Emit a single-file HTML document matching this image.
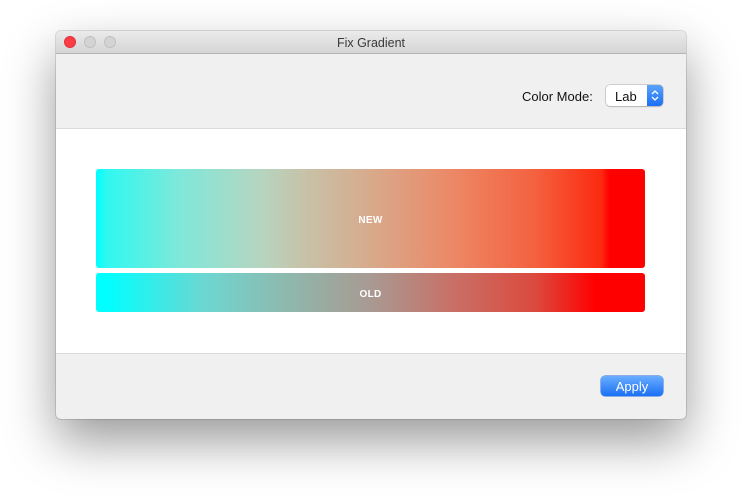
<!DOCTYPE html><html><head><style>
body{margin:0;width:742px;height:500px;background:#fff;font-family:"Liberation Sans",sans-serif;position:relative;overflow:hidden}
.win{position:absolute;left:56px;top:31px;width:630px;height:388px;border-radius:5px;overflow:hidden;box-shadow:0 22px 50px rgba(0,0,0,.4),0 0 0 1px rgba(0,0,0,.12);background:#f0f0f0}
.tb{height:22px;background:linear-gradient(#ebebeb,#d5d5d5);border-bottom:1px solid #b4b4b4;text-align:center;font-size:12.5px;line-height:24px;color:#3a3a3a}
.dot{position:absolute;top:5px;width:12px;height:12px;border-radius:50%;box-sizing:border-box}
.top{position:absolute;top:23px;left:0;right:0;height:74px;background:#f0f0f0;border-bottom:1px solid #dcdcdc}
.mid{position:absolute;top:98px;left:0;right:0;height:224px;background:#fff;border-bottom:1px solid #dcdcdc}
.bar{position:absolute;left:40px;width:549px;border-radius:3px;color:#fff;font-weight:bold;font-size:10px;text-align:center;letter-spacing:.3px}
</style></head><body>
<div class="win">
<div class="tb">Fix Gradient</div>
<div class="dot" style="left:8px;background:#fc3c44;border:1px solid #e0313a"></div>
<div class="dot" style="left:28px;background:#d4d4d4;border:1px solid #c0c0c0"></div>
<div class="dot" style="left:48px;background:#d4d4d4;border:1px solid #c0c0c0"></div>
<div class="top">
<span style="position:absolute;left:466px;top:35px;font-size:13px;color:#111">Color Mode:</span>
<div style="position:absolute;left:550px;top:31px;width:57px;height:21px;border-radius:4px;background:#fff;box-shadow:0 0 0 .5px #aaa,0 1px 1px rgba(0,0,0,.2);overflow:hidden">
<span style="position:absolute;left:9px;top:4px;font-size:13px;color:#111">Lab</span>
<div style="position:absolute;right:0;top:0;width:16px;height:21px;background:linear-gradient(#5aa3fb,#1c6ff6)">
<svg width="16" height="21" viewBox="0 0 16 21"><path d="M5 9 L8 6 L11 9 M5 12 L8 15 L11 12" fill="none" stroke="#fff" stroke-width="1.3"/></svg></div>
</div>
</div>
<div class="mid">
<div class="bar" style="top:40px;height:99px;line-height:103px;background:linear-gradient(90deg,#0ff 0%,#2ff8f0 2%,#7ee8da 15%,#b6d5c0 30%,#c7c2a8 38%,#d8aa8c 50%,#ec8866 65%,#f4613f 80%,#fc2a10 92%,#f00 93.5%,#f00)">NEW</div>
<div class="bar" style="top:144px;height:39px;line-height:43px;background:linear-gradient(90deg,#0ff 0%,#0ff 2%,#6ed6d0 20%,#8fb8ad 35%,#a89a92 50%,#c87066 65%,#db4a3e 80%,#f00 91%,#f00)">OLD</div>
</div>
<div style="position:absolute;left:545px;top:345px;width:62px;height:20px;border-radius:4px;background:linear-gradient(#6aaeff,#1a6ff5);box-shadow:0 0 0 .5px #2a6ad8;color:#fff;font-size:13px;text-align:center;line-height:22px">Apply</div>
</div>
</body></html>
